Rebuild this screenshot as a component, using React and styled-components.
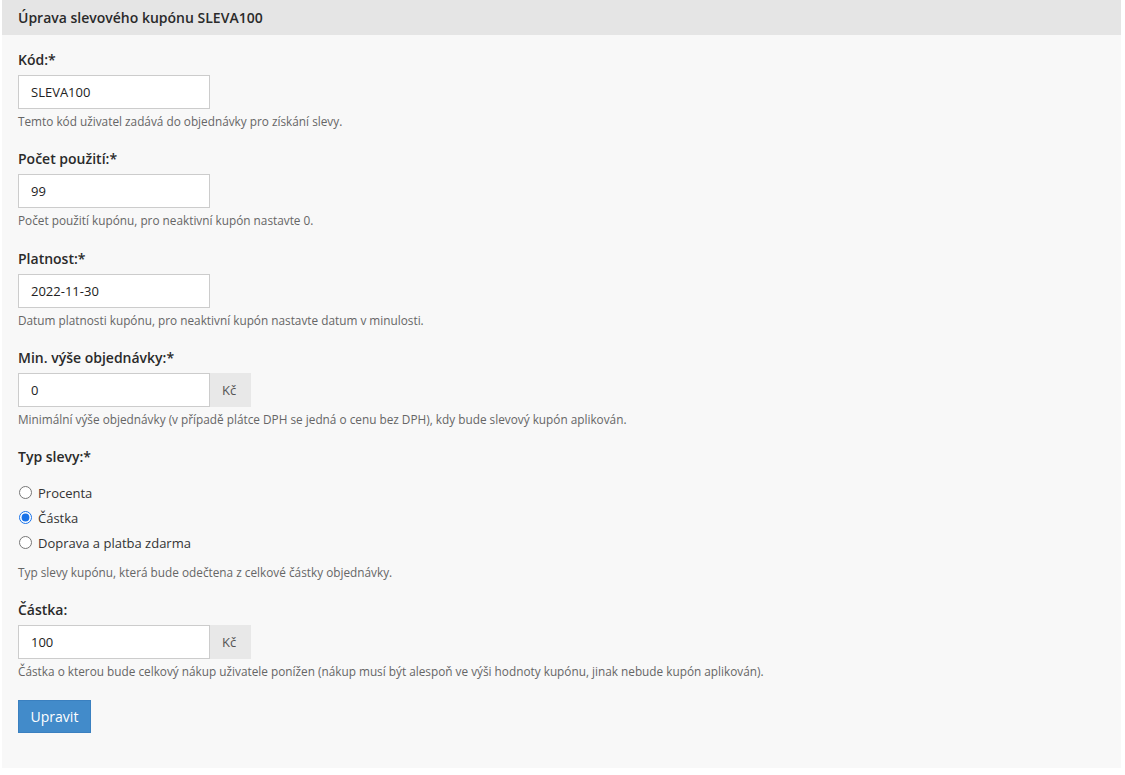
import React from "react";
import styled, { createGlobalStyle } from "styled-components";

const GlobalStyle = createGlobalStyle`
  html, body {
    margin: 0;
    padding: 0;
    background: #ffffff;
    font-family: "Open Sans", "Noto Sans", Arial, sans-serif;
    color: #222;
  }
  * {
    box-sizing: border-box;
  }
`;

const fields = [
  {
    label: "Kód:*",
    value: "SLEVA100",
    help: "Temto kód uživatel zadává do objednávky pro získání slevy.",
  },
  {
    label: "Počet použití:*",
    value: "99",
    help: "Počet použití kupónu, pro neaktivní kupón nastavte 0.",
  },
  {
    label: "Platnost:*",
    value: "2022-11-30",
    help: "Datum platnosti kupónu, pro neaktivní kupón nastavte datum v minulosti.",
  },
  {
    label: "Min. výše objednávky:*",
    value: "0",
    addon: "Kč",
    help: "Minimální výše objednávky (v případě plátce DPH se jedná o cenu bez DPH), kdy bude slevový kupón aplikován.",
  },
];

const discountTypes = ["Procenta", "Částka", "Doprava a platba zdarma"];

function Field({ label, value, addon, help }) {
  return (
    <Group>
      <Label>{label}</Label>
      <InputRow>
        <TextInput defaultValue={value} />
        {addon && <Addon>{addon}</Addon>}
      </InputRow>
      <Help>{help}</Help>
    </Group>
  );
}

export default function App() {
  return (
    <>
      <GlobalStyle />
      <Page>
        <Panel>
          <PanelHeader>Úprava slevového kupónu SLEVA100</PanelHeader>
          <Form onSubmit={(e) => e.preventDefault()}>
            {fields.map((f) => (
              <Field key={f.label} {...f} />
            ))}

            <Group>
              <Label>Typ slevy:*</Label>
              <RadioList>
                {discountTypes.map((t) => (
                  <RadioRow key={t}>
                    <Radio
                      type="radio"
                      name="type"
                      defaultChecked={t === "Částka"}
                    />
                    {t}
                  </RadioRow>
                ))}
              </RadioList>
              <Help $spaced>
                Typ slevy kupónu, která bude odečtena z celkové částky objednávky.
              </Help>
            </Group>

            <Field
              label="Částka:"
              value="100"
              addon="Kč"
              help="Částka o kterou bude celkový nákup uživatele ponížen (nákup musí být alespoň ve výši hodnoty kupónu, jinak nebude kupón aplikován)."
            />

            <SubmitButton type="submit">Upravit</SubmitButton>
          </Form>
        </Panel>
      </Page>
    </>
  );
}

const Page = styled.div`
  padding: 0 4px 7px 2px;
`;

const Panel = styled.section`
  background: #f8f8f8;
  min-height: 768px;
`;

const PanelHeader = styled.h1`
  margin: 0;
  height: 35px;
  padding: 0 16px;
  display: flex;
  align-items: center;
  background: #e5e5e5;
  font-size: 14px;
  font-weight: 600;
  color: #2a2a2a;
`;

const Form = styled.form`
  padding: 15px 16px 34px;
`;

const Group = styled.div`
  margin-bottom: 19.3px;
`;

const Label = styled.label`
  display: block;
  font-size: 14px;
  line-height: 20px;
  font-weight: 600;
  color: #2a2a2a;
  margin-bottom: 5px;
`;

const InputRow = styled.div`
  display: flex;
  height: 34px;
`;

const TextInput = styled.input`
  width: 192px;
  height: 34px;
  padding: 0 12px;
  border: 1px solid #ccc;
  background: #fff;
  font-family: inherit;
  font-size: 13px;
  color: #222;
  outline: none;
`;

const Addon = styled.span`
  display: flex;
  align-items: center;
  width: 41px;
  padding: 0 12px;
  background: #e8e8e8;
  font-size: 13px;
  color: #555;
`;

const Help = styled.p`
  margin: ${(p) => (p.$spaced ? "9px" : "4px")} 0 0;
  font-size: 11.8px;
  line-height: 17px;
  color: #666;
`;

const RadioList = styled.div`
  display: flex;
  flex-direction: column;
  margin-top: 13px;
`;

const RadioRow = styled.label`
  display: flex;
  align-items: center;
  gap: 6px;
  height: 25px;
  font-size: 13px;
  color: #333;
`;

const Radio = styled.input`
  margin: 0 0 0 1px;
  width: 13px;
  height: 13px;
  accent-color: #1a73e8;
`;

const SubmitButton = styled.button`
  margin-top: 0;
  height: 33px;
  width: 73px;
  padding: 0;
  border: 1px solid #3a80c0;
  background: #428bca;
  color: #fff;
  font-family: inherit;
  font-size: 14px;
  cursor: pointer;
`;
